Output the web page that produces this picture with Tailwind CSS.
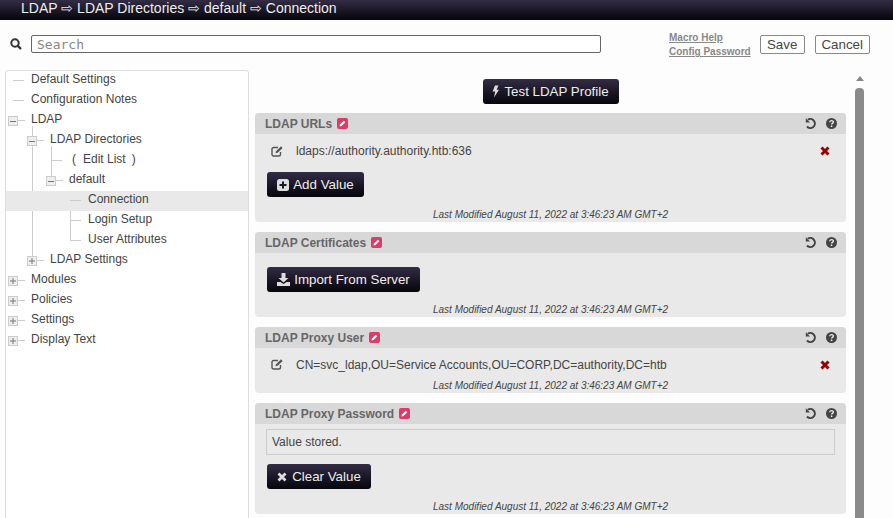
<!DOCTYPE html>
<html lang="en">
<head>
  <meta charset="UTF-8" />
  <title>LDAP Connection</title>
  <script src="https://cdn.jsdelivr.net/npm/@tailwindcss/browser@4"></script>
</head>
<body class="w-[893px] h-[518px] overflow-hidden bg-[#fdfdfd] text-[#444] text-[12px] font-['Liberation_Sans',Arial,sans-serif]">

  <!-- Title bar -->
  <div class="h-[20px] pl-[21px] bg-gradient-to-b from-[#332d45] to-[#07060c] text-[#eee] text-[14px] leading-[16px] whitespace-nowrap">LDAP ⇨ LDAP Directories ⇨ default ⇨ Connection</div>

  <!-- Search row -->
  <div class="h-[50px] flex items-start">
    <svg class="w-[12px] h-[12px] ml-[10px] mt-[18px] shrink-0" viewBox="0 0 12 12" fill="none" stroke="#333" stroke-width="2"><circle cx="5" cy="5" r="3.7"/><path d="M7.8 7.8L11 11" stroke-width="2.4"/></svg>
    <input placeholder="Search" class="ml-[9px] mt-[15px] w-[570px] h-[18px] px-[5px] pt-[1px] border border-[#666] rounded-[2px] bg-white font-['DejaVu_Sans_Mono',monospace] text-[13px] placeholder:text-[#888]" />
    <div class="ml-[68px] mt-[12px] flex flex-col gap-[2px] text-[10px] leading-[12px] font-bold text-[#888] underline">
      <span>Macro Help</span>
      <span>Config Password</span>
    </div>
    <button class="ml-[9px] mt-[15px] w-[45px] h-[19px] border border-[#888] rounded-[2px] bg-white text-[13.333px] leading-none text-[#444]">Save</button>
    <button class="ml-[10px] mt-[15px] w-[55px] h-[19px] border border-[#888] rounded-[2px] bg-white text-[13.333px] leading-none text-[#444]">Cancel</button>
  </div>

  <div class="flex items-start">
    <!-- Navigation tree -->
    <div class="relative ml-[5px] w-[244px] h-[460px] border border-[#ddd] rounded-t-[3px] bg-white shrink-0 leading-[16px] text-[12px]">
      <!-- vertical connectors -->
      <div class="absolute left-[26px] top-[55px] w-px h-[132px] bg-[#ccc]"></div>
      <div class="absolute left-[45px] top-[75px] w-px h-[30px] bg-[#ccc]"></div>
      <div class="absolute left-[64px] top-[120px] w-px h-[49px] bg-[#ccc]"></div>

      <div class="h-[20px] pl-[25px] relative"><span class="absolute left-[7px] top-[9px] w-[11px] h-px bg-[#ccc]"></span>Default Settings</div>
      <div class="h-[20px] pl-[25px] relative"><span class="absolute left-[7px] top-[9px] w-[11px] h-px bg-[#ccc]"></span>Configuration Notes</div>

      <div class="h-[20px] pl-[25px] relative"><span class="absolute left-[12px] top-[9px] w-[7px] h-px bg-[#ccc]"></span><span class="absolute left-[2px] top-[5px] w-[10px] h-[10px] border border-[#ccc] bg-[#eee] flex items-center justify-center"><span class="w-[6px] h-px bg-[#777]"></span></span>LDAP</div>

      <div class="h-[20px] pl-[44px] relative"><span class="absolute left-[31px] top-[9px] w-[7px] h-px bg-[#ccc]"></span><span class="absolute left-[21px] top-[5px] w-[10px] h-[10px] border border-[#ccc] bg-[#eee] flex items-center justify-center"><span class="w-[6px] h-px bg-[#777]"></span></span>LDAP Directories</div>

      <div class="h-[20px] pl-[66px] relative"><span class="absolute left-[45px] top-[9px] w-[11px] h-px bg-[#ccc]"></span><span>(</span><span class="ml-[7px]">Edit List</span><span class="ml-[6px]">)</span></div>

      <div class="h-[20px] pl-[63px] relative"><span class="absolute left-[50px] top-[9px] w-[7px] h-px bg-[#ccc]"></span><span class="absolute left-[40px] top-[5px] w-[10px] h-[10px] border border-[#ccc] bg-[#eee] flex items-center justify-center"><span class="w-[6px] h-px bg-[#777]"></span></span>default</div>

      <div class="h-[20px] pl-[82px] relative bg-[#e9e9e9]"><span class="absolute left-[64px] top-[9px] w-[11px] h-px bg-[#ccc]"></span>Connection</div>
      <div class="h-[20px] pl-[82px] relative"><span class="absolute left-[64px] top-[9px] w-[11px] h-px bg-[#ccc]"></span>Login Setup</div>
      <div class="h-[20px] pl-[82px] relative"><span class="absolute left-[64px] top-[9px] w-[11px] h-px bg-[#ccc]"></span>User Attributes</div>

      <div class="h-[20px] pl-[44px] relative"><span class="absolute left-[31px] top-[9px] w-[7px] h-px bg-[#ccc]"></span><span class="absolute left-[21px] top-[5px] w-[10px] h-[10px] border border-[#ccc] bg-[#eee] flex items-center justify-center"><svg class="w-[6px] h-[6px]" viewBox="0 0 6 6" stroke="#777" stroke-width="1"><path d="M0 3h6M3 0v6"/></svg></span>LDAP Settings</div>

      <div class="h-[20px] pl-[25px] relative"><span class="absolute left-[12px] top-[9px] w-[7px] h-px bg-[#ccc]"></span><span class="absolute left-[2px] top-[5px] w-[10px] h-[10px] border border-[#ccc] bg-[#eee] flex items-center justify-center"><svg class="w-[6px] h-[6px]" viewBox="0 0 6 6" stroke="#777" stroke-width="1"><path d="M0 3h6M3 0v6"/></svg></span>Modules</div>
      <div class="h-[20px] pl-[25px] relative"><span class="absolute left-[12px] top-[9px] w-[7px] h-px bg-[#ccc]"></span><span class="absolute left-[2px] top-[5px] w-[10px] h-[10px] border border-[#ccc] bg-[#eee] flex items-center justify-center"><svg class="w-[6px] h-[6px]" viewBox="0 0 6 6" stroke="#777" stroke-width="1"><path d="M0 3h6M3 0v6"/></svg></span>Policies</div>
      <div class="h-[20px] pl-[25px] relative"><span class="absolute left-[12px] top-[9px] w-[7px] h-px bg-[#ccc]"></span><span class="absolute left-[2px] top-[5px] w-[10px] h-[10px] border border-[#ccc] bg-[#eee] flex items-center justify-center"><svg class="w-[6px] h-[6px]" viewBox="0 0 6 6" stroke="#777" stroke-width="1"><path d="M0 3h6M3 0v6"/></svg></span>Settings</div>
      <div class="h-[20px] pl-[25px] relative"><span class="absolute left-[12px] top-[9px] w-[7px] h-px bg-[#ccc]"></span><span class="absolute left-[2px] top-[5px] w-[10px] h-[10px] border border-[#ccc] bg-[#eee] flex items-center justify-center"><svg class="w-[6px] h-[6px]" viewBox="0 0 6 6" stroke="#777" stroke-width="1"><path d="M0 3h6M3 0v6"/></svg></span>Display Text</div>
    </div>

    <!-- Settings column -->
    <div class="ml-[6px] w-[591px] shrink-0">
      <div class="flex justify-center pt-[9px] h-[43px]">
        <button class="h-[25px] w-[136px] rounded-[3px] bg-gradient-to-b from-[#332d45] to-[#07060c] text-[#eee] text-[13.333px] flex items-center justify-center gap-[5px]">
          <svg class="w-[7px] h-[13px]" viewBox="0 0 7 12" fill="#ddd"><path d="M3 0h3.500L4.600 4.200H7L2 12l1.200-6H.6z"/></svg>Test LDAP Profile
        </button>
      </div>

      <!-- LDAP URLs -->
      <div class="h-[109px] mb-[10px] bg-[#e9e9e9] rounded-[4px] overflow-hidden relative">
        <div class="h-[21px] bg-[#d8d8d8] flex items-center pl-[10px] pr-[9px] font-bold text-[#666]">
          <span>LDAP URLs</span>
          <svg class="ml-[5px] w-[11px] h-[11px]" viewBox="0 0 11 11"><rect width="11" height="11" rx="2" fill="#dd3c6a"/><path d="M2.500 8.500l.5-2L6.800 2.700l1.500 1.500L4.500 8z" fill="#fff"/></svg>
          <svg class="ml-auto w-[12px] h-[12px]" viewBox="0 0 12 12" fill="none" stroke="#444" stroke-width="2"><path d="M2.800 1.800A4.500 4.500 0 1 1 2 8.500"/><path d="M.8 .3v4.200h4.200z" fill="#444" stroke="none"/></svg>
          <svg class="ml-[9px] w-[11px] h-[11px]" viewBox="0 0 11 11"><circle cx="5.500" cy="5.500" r="5.500" fill="#444"/><path d="M3.700 4.300c0-2.300 3.700-2.300 3.700-.2 0 1.300-1.800 1.300-1.800 2.500" fill="none" stroke="#eee" stroke-width="1.300"/><rect x="4.800" y="7.500" width="1.500" height="1.500" fill="#eee"/></svg>
        </div>
        <div class="flex items-center h-[34px] pl-[16px] pr-[16px]">
          <svg class="w-[13px] h-[12px] shrink-0" viewBox="0 0 13 12" fill="none" stroke="#555" stroke-width="1.400"><path d="M9.500 7v2.500a1.500 1.500 0 0 1-1.500 1.500H2.500A1.500 1.500 0 0 1 1 9.500V4a1.500 1.500 0 0 1 1.500-1.500h4.500"/><path d="M4.500 8.200l.6-2L10 1.300l1.600 1.600-4.900 4.800z" fill="#555" stroke="none"/></svg>
          <span class="ml-[12px]">ldaps://authority.authority.htb:636</span>
          <svg class="ml-auto w-[10px] h-[10px]" viewBox="0 0 10 10"><path d="M1.500 1.500l7 7M8.500 1.500l-7 7" stroke="#900" stroke-width="3"/></svg>
        </div>
        <button class="ml-[12px] mt-[4px] h-[25px] w-[97px] rounded-[3px] bg-gradient-to-b from-[#332d45] to-[#07060c] text-[#eee] text-[13.333px] flex items-center justify-center gap-[4px]">
          <svg class="w-[12px] h-[12px]" viewBox="0 0 12 12"><rect width="12" height="12" rx="2.500" fill="#ddd"/><path d="M2.500 6h7M6 2.500v7" stroke="#1a1724" stroke-width="2"/></svg>Add Value
        </button>
        <div class="absolute bottom-[1px] left-0 right-0 pl-[178px] text-[10px] leading-[12px] italic">Last Modified August 11, 2022 at 3:46:23 AM GMT+2</div>
      </div>

      <!-- LDAP Certificates -->
      <div class="h-[85px] mb-[10px] bg-[#e9e9e9] rounded-[4px] overflow-hidden relative">
        <div class="h-[21px] bg-[#d8d8d8] flex items-center pl-[10px] pr-[9px] font-bold text-[#666]">
          <span>LDAP Certificates</span>
          <svg class="ml-[5px] w-[11px] h-[11px]" viewBox="0 0 11 11"><rect width="11" height="11" rx="2" fill="#dd3c6a"/><path d="M2.500 8.500l.5-2L6.800 2.700l1.500 1.500L4.500 8z" fill="#fff"/></svg>
          <svg class="ml-auto w-[12px] h-[12px]" viewBox="0 0 12 12" fill="none" stroke="#444" stroke-width="2"><path d="M2.800 1.800A4.500 4.500 0 1 1 2 8.500"/><path d="M.8 .3v4.200h4.200z" fill="#444" stroke="none"/></svg>
          <svg class="ml-[9px] w-[11px] h-[11px]" viewBox="0 0 11 11"><circle cx="5.500" cy="5.500" r="5.500" fill="#444"/><path d="M3.700 4.300c0-2.300 3.700-2.300 3.700-.2 0 1.300-1.800 1.300-1.800 2.500" fill="none" stroke="#eee" stroke-width="1.300"/><rect x="4.800" y="7.500" width="1.500" height="1.500" fill="#eee"/></svg>
        </div>
        <button class="ml-[12px] mt-[14px] h-[25px] w-[153px] rounded-[3px] bg-gradient-to-b from-[#332d45] to-[#07060c] text-[#eee] text-[13.333px] flex items-center justify-center gap-[4px]">
          <svg class="w-[13px] h-[13px]" viewBox="0 0 13 13" fill="#ddd"><path d="M4.500 0h4v5h3L6.500 9.500 1.500 5h3z"/><path d="M0 9h3.500l3 2 3-2H13v4H0z"/></svg>Import From Server
        </button>
        <div class="absolute bottom-[1px] left-0 right-0 pl-[178px] text-[10px] leading-[12px] italic">Last Modified August 11, 2022 at 3:46:23 AM GMT+2</div>
      </div>

      <!-- LDAP Proxy User -->
      <div class="h-[66px] mb-[10px] bg-[#e9e9e9] rounded-[4px] overflow-hidden relative">
        <div class="h-[21px] bg-[#d8d8d8] flex items-center pl-[10px] pr-[9px] font-bold text-[#666]">
          <span>LDAP Proxy User</span>
          <svg class="ml-[5px] w-[11px] h-[11px]" viewBox="0 0 11 11"><rect width="11" height="11" rx="2" fill="#dd3c6a"/><path d="M2.500 8.500l.5-2L6.800 2.700l1.500 1.500L4.500 8z" fill="#fff"/></svg>
          <svg class="ml-auto w-[12px] h-[12px]" viewBox="0 0 12 12" fill="none" stroke="#444" stroke-width="2"><path d="M2.800 1.800A4.500 4.500 0 1 1 2 8.500"/><path d="M.8 .3v4.200h4.200z" fill="#444" stroke="none"/></svg>
          <svg class="ml-[9px] w-[11px] h-[11px]" viewBox="0 0 11 11"><circle cx="5.500" cy="5.500" r="5.500" fill="#444"/><path d="M3.700 4.300c0-2.300 3.700-2.300 3.700-.2 0 1.300-1.800 1.300-1.800 2.500" fill="none" stroke="#eee" stroke-width="1.300"/><rect x="4.800" y="7.500" width="1.500" height="1.500" fill="#eee"/></svg>
        </div>
        <div class="flex items-center h-[33px] pl-[16px] pr-[16px]">
          <svg class="w-[13px] h-[12px] shrink-0 -mt-[2px]" viewBox="0 0 13 12" fill="none" stroke="#555" stroke-width="1.400"><path d="M9.500 7v2.500a1.500 1.500 0 0 1-1.500 1.500H2.500A1.500 1.500 0 0 1 1 9.500V4a1.500 1.500 0 0 1 1.500-1.500h4.500"/><path d="M4.500 8.200l.6-2L10 1.300l1.600 1.600-4.900 4.800z" fill="#555" stroke="none"/></svg>
          <span class="ml-[12px]">CN=svc_ldap,OU=Service Accounts,OU=CORP,DC=authority,DC=htb</span>
          <svg class="ml-auto w-[10px] h-[10px]" viewBox="0 0 10 10"><path d="M1.500 1.500l7 7M8.500 1.500l-7 7" stroke="#900" stroke-width="3"/></svg>
        </div>
        <div class="absolute bottom-[1px] left-0 right-0 pl-[178px] text-[10px] leading-[12px] italic">Last Modified August 11, 2022 at 3:46:23 AM GMT+2</div>
      </div>

      <!-- LDAP Proxy Password -->
      <div class="h-[111px] bg-[#e9e9e9] rounded-[4px] overflow-hidden relative">
        <div class="h-[21px] bg-[#d8d8d8] flex items-center pl-[10px] pr-[9px] font-bold text-[#666]">
          <span>LDAP Proxy Password</span>
          <svg class="ml-[5px] w-[11px] h-[11px]" viewBox="0 0 11 11"><rect width="11" height="11" rx="2" fill="#dd3c6a"/><path d="M2.500 8.500l.5-2L6.800 2.700l1.500 1.500L4.500 8z" fill="#fff"/></svg>
          <svg class="ml-auto w-[12px] h-[12px]" viewBox="0 0 12 12" fill="none" stroke="#444" stroke-width="2"><path d="M2.800 1.800A4.500 4.500 0 1 1 2 8.500"/><path d="M.8 .3v4.200h4.200z" fill="#444" stroke="none"/></svg>
          <svg class="ml-[9px] w-[11px] h-[11px]" viewBox="0 0 11 11"><circle cx="5.500" cy="5.500" r="5.500" fill="#444"/><path d="M3.700 4.300c0-2.300 3.700-2.300 3.700-.2 0 1.300-1.800 1.300-1.800 2.500" fill="none" stroke="#eee" stroke-width="1.300"/><rect x="4.800" y="7.500" width="1.500" height="1.500" fill="#eee"/></svg>
        </div>
        <div class="ml-[11px] mr-[11px] mt-[5px] h-[26px] px-[5px] border border-[#ccc] leading-[24px]">Value stored.</div>
        <button class="ml-[12px] mt-[9px] h-[25px] w-[104px] rounded-[3px] bg-gradient-to-b from-[#332d45] to-[#07060c] text-[#eee] text-[13.333px] flex items-center justify-center gap-[5px]">
          <svg class="w-[10px] h-[10px]" viewBox="0 0 10 10"><path d="M1.500 1.500l7 7M8.500 1.500l-7 7" stroke="#ddd" stroke-width="2.800"/></svg>Clear Value
        </button>
        <div class="absolute bottom-[1px] left-0 right-0 pl-[178px] text-[10px] leading-[12px] italic">Last Modified August 11, 2022 at 3:46:23 AM GMT+2</div>
      </div>
    </div>

    <!-- Scrollbar -->
    <div class="ml-[9px] w-[9px] shrink-0 flex flex-col items-center">
      <div class="mt-[6px] w-0 h-0 border-x-[4.5px] border-x-transparent border-b-[5px] border-b-[#888]"></div>
      <div class="mt-[7px] w-[9px] h-[440px] rounded-t-[4px] bg-[#8a8a8a]"></div>
    </div>
  </div>
</body>
</html>
